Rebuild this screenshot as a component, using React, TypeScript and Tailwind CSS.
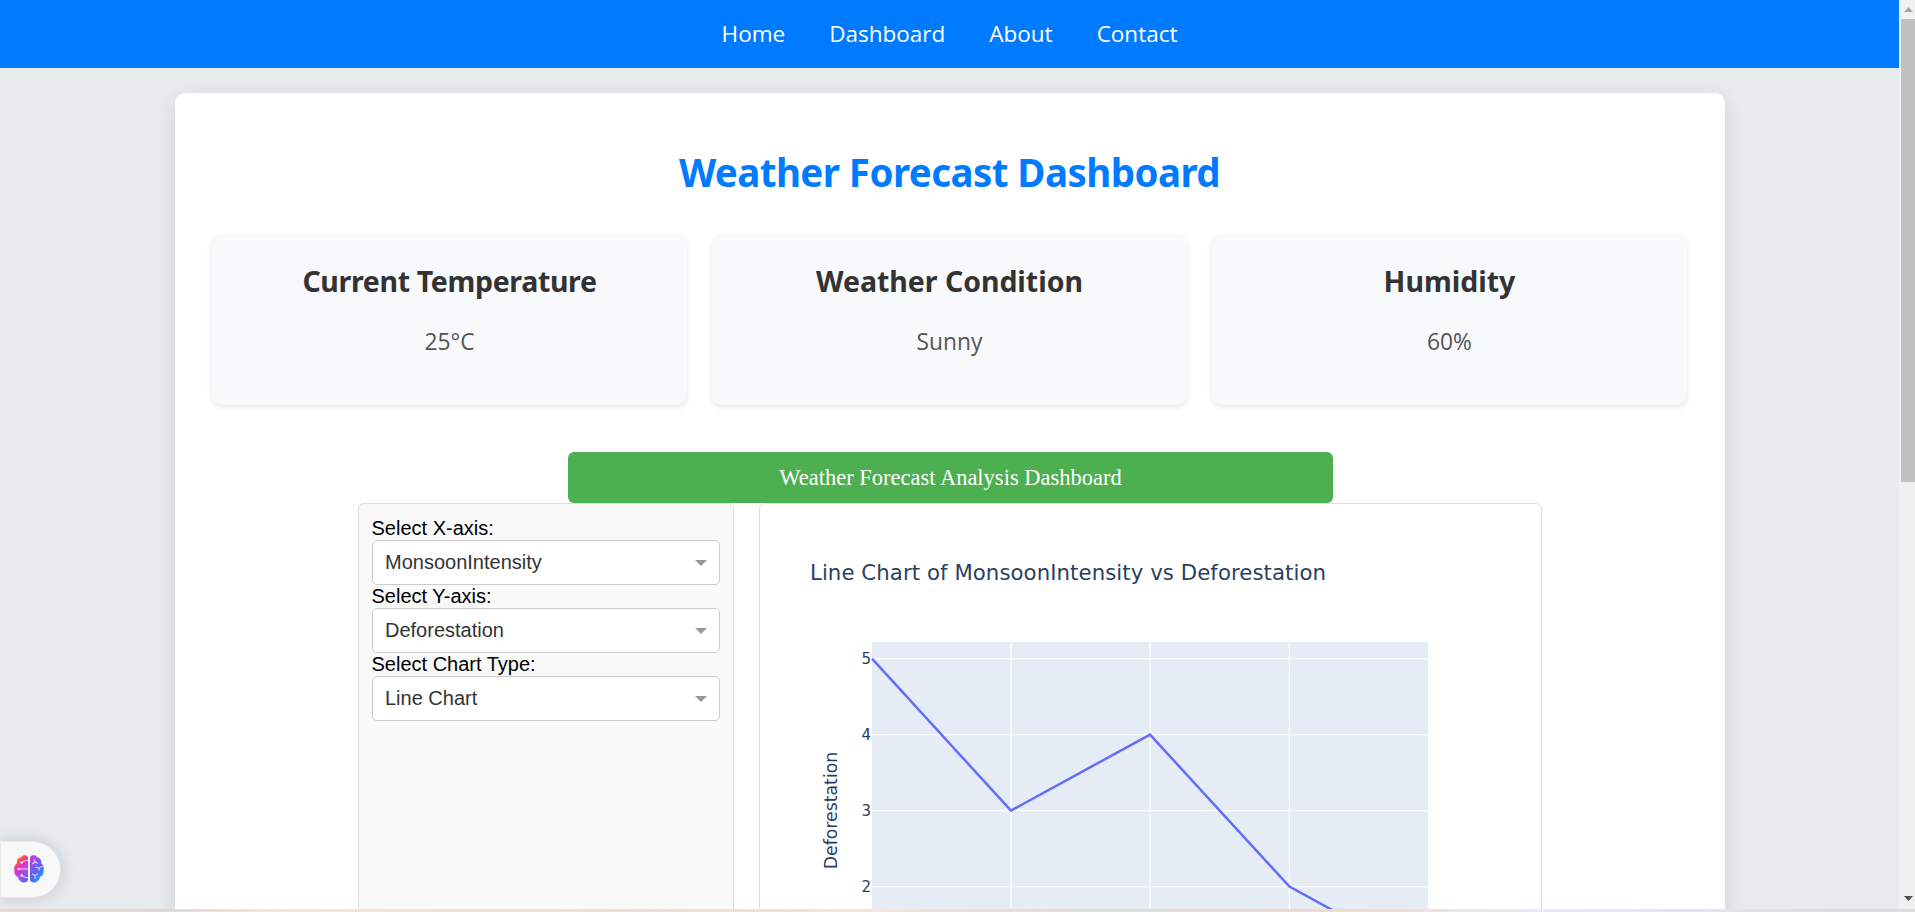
const NAV = ["Home", "Dashboard", "About", "Contact"];

const STATS = [
  { label: "Current Temperature", value: "25°C", tracking: "tracking-[-0.34px]" },
  { label: "Weather Condition", value: "Sunny", tracking: "tracking-[-0.04px]" },
  { label: "Humidity", value: "60%", tracking: "tracking-normal" },
];

const SELECTS = [
  { label: "Select X-axis:", value: "MonsoonIntensity" },
  { label: "Select Y-axis:", value: "Deforestation" },
  { label: "Select Chart Type:", value: "Line Chart" },
];

function Navbar() {
  return (
    <nav className="flex h-[68px] items-center justify-center gap-[44px] bg-[#007bff] font-['Open_Sans',sans-serif] text-[22.5px] text-white">
      {NAV.map((item) => (
        <a key={item} href="#">
          {item}
        </a>
      ))}
    </nav>
  );
}

function StatCard({ label, value, tracking }: { label: string; value: string; tracking: string }) {
  return (
    <div className="flex h-[170px] flex-1 flex-col items-center rounded-[10px] bg-[#f8f9fb] pt-[26px] shadow-[0_2px_6px_rgba(0,0,0,0.1)]">
      <h2 className={`text-[28.5px] leading-10 font-bold text-[#333] ${tracking}`}>{label}</h2>
      <p className="mt-[26px] font-['Open_Sans',sans-serif] text-[22.8px] leading-[30px] text-[#555] [font-weight:370]">
        {value}
      </p>
    </div>
  );
}

function Select({ label, value }: { label: string; value: string }) {
  return (
    <div>
      <div className="h-[23px] leading-[23px] text-black">{label}</div>
      <div className="flex h-[45px] items-center justify-between rounded-[5px] border border-[#ccc] bg-white pr-3 pl-[12.5px] text-[#333]">
        <span className="pb-0.5">{value}</span>
        <svg width="12" height="6" viewBox="0 0 12 6">
          <path d="M0 0h12L6 6z" fill="#999" />
        </svg>
      </div>
    </div>
  );
}

function LineChart() {
  const ticks = [
    { label: "5", y: 154.7 },
    { label: "4", y: 230.6 },
    { label: "3", y: 306.6 },
    { label: "2", y: 382.5 },
  ];
  return (
    <svg width="780" height="560" viewBox="0 0 780 560" fontFamily="'DejaVu Sans', Verdana, sans-serif" fill="#2a3f5f">
      <text x="50" y="75.5" fontSize="21.25" textLength="516" lengthAdjust="spacing">
        Line Chart of MonsoonIntensity vs Deforestation
      </text>
      <rect x="112" y="138" width="556" height="380" fill="#e5ecf6" />
      <g stroke="#fff" strokeWidth="1.25">
        {[251, 390, 529.4].map((x) => (
          <line key={x} x1={x} x2={x} y1="138" y2="518" />
        ))}
        {ticks.map((t) => (
          <line key={t.label} x1="112" x2="668" y1={t.y} y2={t.y} />
        ))}
      </g>
      <polyline
        points="112,154.7 251,306.6 390,230.6 529.4,382.5 668,458.5"
        fill="none"
        stroke="#636efa"
        strokeWidth="2.5"
      />
      <g fontSize="15" textAnchor="end">
        {ticks.map((t) => (
          <text key={t.label} x="111" y={t.y + 5.3}>
            {t.label}
          </text>
        ))}
      </g>
      <text fontSize="17.3" textAnchor="middle" transform="translate(77 306.5) rotate(-90)">
        Deforestation
      </text>
    </svg>
  );
}

function BrainIcon() {
  return (
    <svg width="30" height="28" viewBox="0 0 30 28">
      <defs>
        <linearGradient id="brain-left" x1="0.1" y1="0" x2="0.6" y2="1">
          <stop offset="0" stopColor="#f7a51c" />
          <stop offset="0.22" stopColor="#f7633f" />
          <stop offset="0.45" stopColor="#ee2cc0" />
          <stop offset="0.72" stopColor="#b04be8" />
          <stop offset="1" stopColor="#6a5cf2" />
        </linearGradient>
        <linearGradient id="brain-right" x1="0.1" y1="0" x2="0.7" y2="1">
          <stop offset="0" stopColor="#c63be0" />
          <stop offset="0.4" stopColor="#7a55f0" />
          <stop offset="0.7" stopColor="#4a6cf8" />
          <stop offset="1" stopColor="#22b4fb" />
        </linearGradient>
      </defs>
      <path
        d="M14 2.2C12.5-.2 8.5-.3 7 2.2C4 2.5 2.3 5 3 8C.5 9.8-.5 13 .5 15.5C0 19 1.5 21 3.8 21.8C4.5 25 6.5 27 9 27.4C11.3 28 13.5 26.8 14 25Z"
        fill="url(#brain-left)"
      />
      <path
        d="M16 2.2C17.5-.2 21.5-.3 23 2.2C26 2.5 27.7 5 27 8C29.5 9.8 30.5 13 29.5 15.5C30 19 28.5 21 26.2 21.8C25.5 25 23.5 27 21 27.4C18.7 28 16.5 26.8 16 25Z"
        fill="url(#brain-right)"
      />
      <g fill="none" stroke="#fff" strokeOpacity="0.75" strokeWidth="1.1" strokeLinecap="round">
        <path d="M14 5.5H11L8 7.5M14 14H5M14 22.5H11L8 20.5" />
        <path d="M20.3 4.8L21 7L18.5 8.8M21 7L23.5 8.3M21.5 12.5C23 12 24.5 12.5 25 14.2M29 11.5C26.5 11.5 25 12.5 25 15M18.5 19L21 20.6L23.5 19M21 20.6V23.5" />
      </g>
      <g fill="#fff" fillOpacity="0.9">
        <circle cx="7.7" cy="7.6" r="1.2" />
        <circle cx="4.8" cy="14" r="1.2" />
        <circle cx="7.7" cy="20.4" r="1.2" />
      </g>
    </svg>
  );
}

function ScrollBar() {
  return (
    <div className="flex h-full w-4 flex-col items-end bg-[#f0f0f0]">
      <div className="flex h-[19px] w-[14px] justify-center pt-[7px]">
        <svg width="9" height="5" viewBox="0 0 9 5">
          <path d="M0 5L4.5 0L9 5z" fill="#a3a3a3" />
        </svg>
      </div>
      <div className="h-[463px] w-[14px] bg-[#c1c1c1]" />
      <div className="mt-auto flex w-[14px] justify-center pb-[11px]">
        <svg width="9" height="5" viewBox="0 0 9 5">
          <path d="M0 0h9L4.5 5z" fill="#505050" />
        </svg>
      </div>
    </div>
  );
}

export default function App() {
  return (
    <div className="relative flex h-[912px] w-[1915px] overflow-hidden font-['Noto_Sans',sans-serif]">
      <div className="h-full min-w-0 flex-1 overflow-hidden bg-[#e7ebee]">
        <Navbar />
        <main className="mx-auto mt-[25px] h-[1400px] w-[1550px] rounded-[10px] bg-white px-[37.5px] pt-[51px] shadow-[0_5px_19px_rgba(0,0,0,0.1)]">
          <h1 className="text-center text-[38.5px] leading-14 font-bold tracking-[-0.57px] text-[#007bff]">
            Weather Forecast Dashboard
          </h1>
          <section className="mt-[35px] flex gap-[25px]">
            {STATS.map((s) => (
              <StatCard key={s.label} {...s} />
            ))}
          </section>
          <div className="mt-[47px] mr-auto ml-[356px] h-[51px] w-[765px] rounded-[6px] bg-[#4caf50] text-center font-['Liberation_Serif',serif] text-[22.5px] leading-[51px] text-white">
            Weather Forecast Analysis Dashboard
          </div>
          <section className="mx-auto flex w-[1184px] gap-[25px] font-['Liberation_Sans',sans-serif] text-xl">
            <div className="h-[700px] w-[376px] rounded-[6px] border border-[#ddd] bg-[#f9f9f9] p-[13px]">
              {SELECTS.map((s) => (
                <Select key={s.label} {...s} />
              ))}
            </div>
            <div className="h-[700px] flex-1 overflow-hidden rounded-[6px] border border-[#ddd] bg-white">
              <LineChart />
            </div>
          </section>
        </main>
      </div>
      <ScrollBar />
      <div className="absolute top-[841px] left-0 flex h-[57px] w-[61px] items-center rounded-r-full border border-[#e8e8e8] bg-[#f8f8f8] pb-px pl-[13px] shadow-[0_0_16px_rgba(0,0,0,0.16)]">
        <BrainIcon />
      </div>
      <div className="absolute bottom-0 left-0 h-[3px] w-full bg-[linear-gradient(90deg,#e9d9cf_0%,#e0d8d5_9%,#f8e4d5_14%,#f3e0d5_24%,#ecdcd6_34%,#f8e4d5_45%,#e4dedb_54%,#dcdcdc_60%,#ecd8d0_66%,#f2dccb_72%,#ece4e8_76%,#e7e9f7_80%,#e4e3ef_90%,#dcdcdc_96%,#dcdcdc_100%)]" />
    </div>
  );
}
